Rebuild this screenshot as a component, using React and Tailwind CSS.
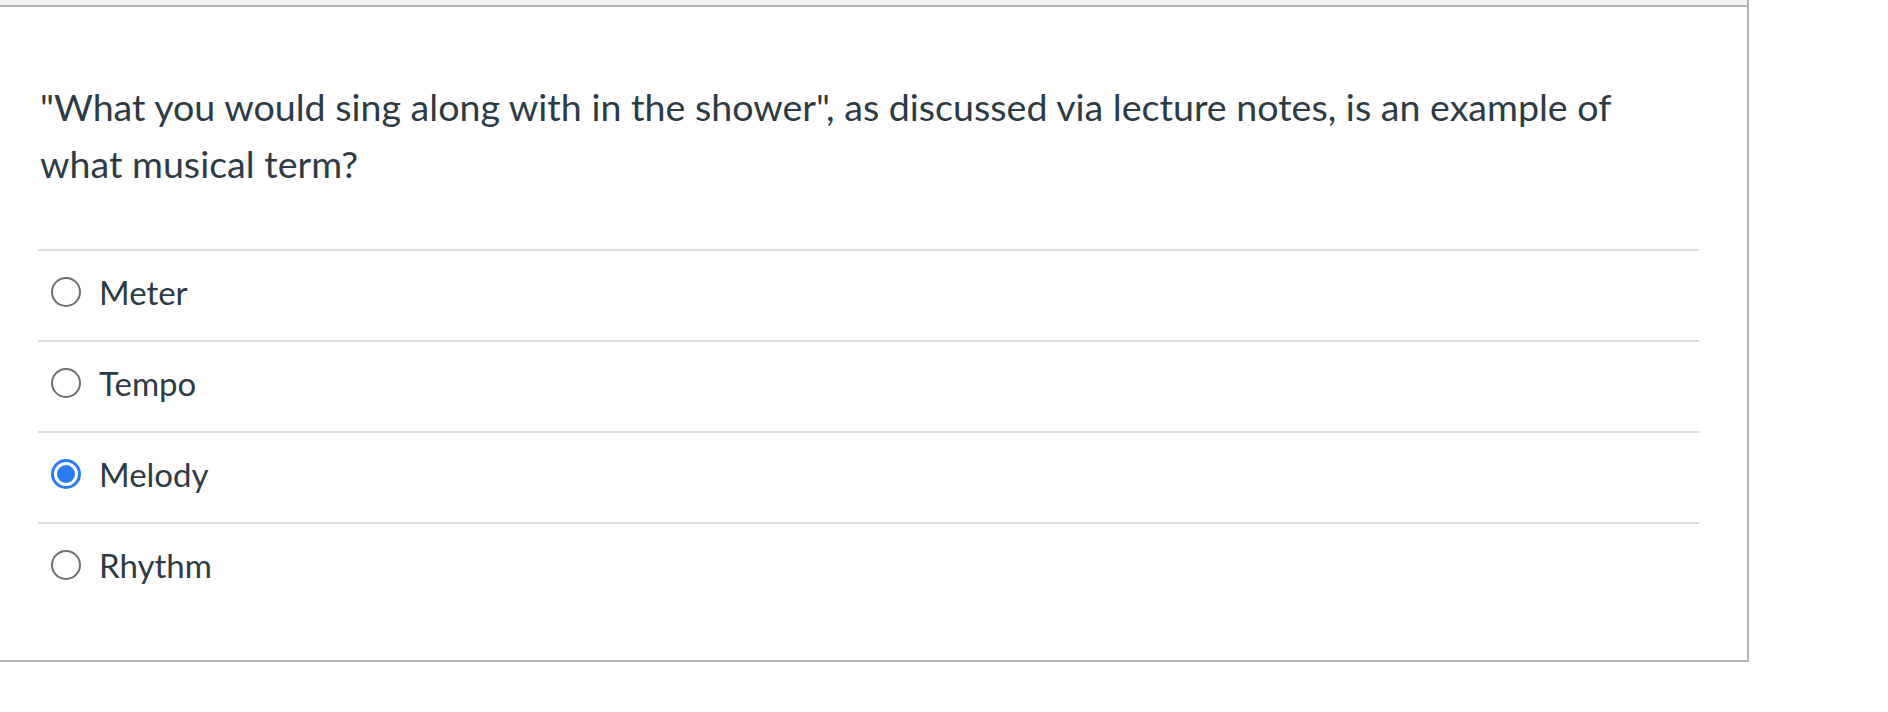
import React from "react";

const options = [
  { label: "Meter", checked: false },
  { label: "Tempo", checked: false },
  { label: "Melody", checked: true },
  { label: "Rhythm", checked: false },
];

function Radio({ checked }) {
  if (checked) {
    return (
      <span className="flex h-[30px] w-[30px] shrink-0 items-center justify-center rounded-full border-[3px] border-[#2b7bf5] bg-white">
        <span className="h-[18px] w-[18px] rounded-full bg-[#2b7bf5]" />
      </span>
    );
  }
  return (
    <span className="h-[30px] w-[30px] shrink-0 rounded-full border-2 border-[#6f6f6f] bg-white" />
  );
}

export default function App() {
  return (
    <div className="min-h-[712px] bg-white font-['Lato','Liberation_Sans',sans-serif] text-[#2d3b45]">
      <div className="w-[1749px] border-r-2 border-b-2 border-[#b3b3b3] bg-white">
        <div className="h-[5px] bg-[#f2f2f2]" />
        <div className="border-t-2 border-[#b3b3b3] pl-[38px] pr-[48px] pt-[71px] pb-[47px]">
          <p className="w-[1630px] pl-[2px] text-[37.6px] leading-[57px]">
            "What you would sing along with in the shower", as discussed via lecture notes, is an example of what musical term?
          </p>
          <div className="mt-[57px]">
            {options.map((o) => (
              <label
                key={o.label}
                className="flex h-[91px] items-center gap-[18px] border-t-2 border-[#dcdcdc] pb-[7px] pl-[13px]"
              >
                <Radio checked={o.checked} />
                <span className="text-[33px] leading-[40px]">{o.label}</span>
              </label>
            ))}
          </div>
        </div>
      </div>
    </div>
  );
}
